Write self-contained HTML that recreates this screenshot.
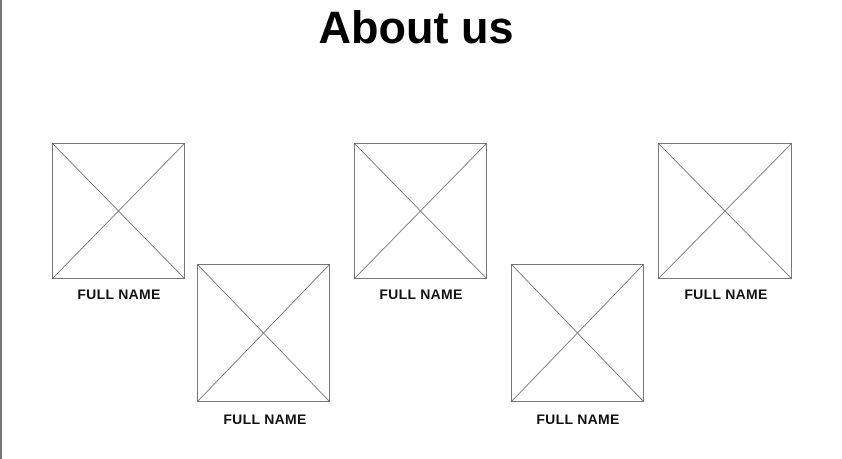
<!DOCTYPE html>
<html><head><style>
body{margin:0;width:842px;height:459px;background:#fff;position:relative;overflow:hidden;font-family:"Liberation Sans",sans-serif;}
.bl{position:absolute;left:0;top:0;width:2px;height:459px;background:#777;}
h1{position:absolute;left:0;width:832px;top:3px;margin:0;text-align:center;font-size:45px;font-weight:bold;color:#000;line-height:50px;}
.b{position:absolute;width:133px;height:136px;}
.l{position:absolute;width:200px;text-align:center;font-size:14px;font-weight:bold;letter-spacing:0.3px;color:#111;line-height:16px;}
</style></head><body>
<div class="bl"></div>
<h1>About us</h1>
<svg class="b" style="left:52px;top:143px" viewBox="0 0 133 136"><rect x="0.5" y="0.5" width="132" height="135" fill="none" stroke="#777"/><path d="M0.5 0.5L132.5 135.5M132.5 0.5L0.5 135.5" stroke="#555" stroke-width="0.7"/></svg>
<svg class="b" style="left:197px;top:264px;height:138px" viewBox="0 0 133 138"><rect x="0.5" y="0.5" width="132" height="137" fill="none" stroke="#777"/><path d="M0.5 0.5L132.5 137.5M132.5 0.5L0.5 137.5" stroke="#555" stroke-width="0.7"/></svg>
<svg class="b" style="left:354px;top:143px" viewBox="0 0 133 136"><rect x="0.5" y="0.5" width="132" height="135" fill="none" stroke="#777"/><path d="M0.5 0.5L132.5 135.5M132.5 0.5L0.5 135.5" stroke="#555" stroke-width="0.7"/></svg>
<svg class="b" style="left:511px;top:264px;height:138px" viewBox="0 0 133 138"><rect x="0.5" y="0.5" width="132" height="137" fill="none" stroke="#777"/><path d="M0.5 0.5L132.5 137.5M132.5 0.5L0.5 137.5" stroke="#555" stroke-width="0.7"/></svg>
<svg class="b" style="left:658px;top:143px;width:134px" viewBox="0 0 134 136"><rect x="0.5" y="0.5" width="133" height="135" fill="none" stroke="#777"/><path d="M0.5 0.5L133.5 135.5M133.5 0.5L0.5 135.5" stroke="#555" stroke-width="0.7"/></svg>
<div class="l" style="left:19px;top:286px">FULL NAME</div>
<div class="l" style="left:165px;top:411px">FULL NAME</div>
<div class="l" style="left:321px;top:286px">FULL NAME</div>
<div class="l" style="left:478px;top:411px">FULL NAME</div>
<div class="l" style="left:626px;top:286px">FULL NAME</div>
</body></html>
